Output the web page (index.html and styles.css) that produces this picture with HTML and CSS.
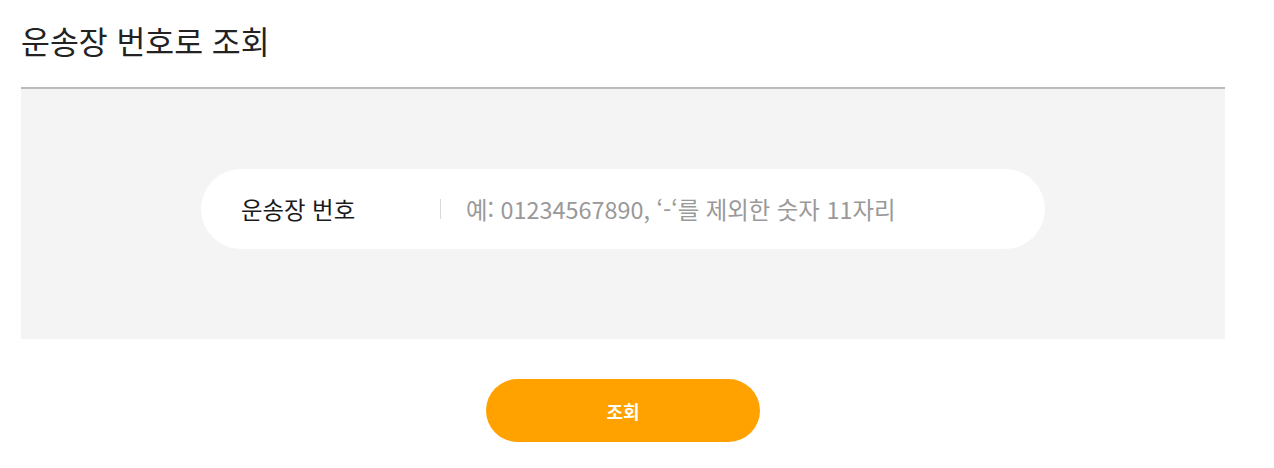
FILE: index.html
```html
<!DOCTYPE html>
<html lang="ko">
<head>
    <meta charset="UTF-8">
    <meta name="viewport" content="width=device-width, initial-scale=1.0">
    <title>운송장 번호로 조회</title>
    <link rel="stylesheet" href="styles.css">
</head>
<body>
    <div class="container">
        <h2 class="title">운송장 번호로 조회</h2>

        <div class="search-box">
            <div class="search-field">
                <label for="invoice-no" class="search-label">운송장 번호</label>
                <span class="divider"></span>
                <input type="text" id="invoice-no" class="search-input" placeholder="예: 01234567890, ‘-‘를 제외한 숫자 11자리">
            </div>
        </div>

        <div class="btn-area">
            <button class="search-btn">조회</button>
        </div>
    </div>
</body>
</html>
```

FILE: styles.css
```css
* {
    margin: 0;
    padding: 0;
    box-sizing: border-box;
}

body {
    font-family: "Noto Sans CJK KR", "Noto Sans", sans-serif;
    background: #fff;
    color: #222;
}

.container {
    width: 1204px;
    margin-left: 21px;
    padding-top: 18px;
}

.title {
    font-size: 31.4px;
    font-weight: 400;
    line-height: 45px;
    color: #222;
    padding-bottom: 24px;
    border-bottom: 2px solid #bbb;
}

.search-box {
    background: #f4f4f4;
    height: 250px;
    display: flex;
    align-items: center;
    justify-content: center;
    padding-bottom: 10px;
}

.search-field {
    width: 844px;
    height: 80px;
    background: #fff;
    border-radius: 40px;
    display: flex;
    align-items: center;
    padding-left: 40px;
}

.search-label {
    width: 199px;
    font-size: 23.4px;
    font-weight: 400;
    color: #1a1a1a;
}

.divider {
    width: 1px;
    height: 20px;
    background: #d9d9d9;
    margin-right: 25px;
}

.search-input {
    flex: 1;
    border: none;
    outline: none;
    background: none;
    font-family: "Noto Sans CJK KR", "Noto Sans", sans-serif;
    font-size: 23.4px;
    color: #222;
    padding-right: 40px;
}

.search-input::placeholder {
    color: #999;
}

.btn-area {
    display: flex;
    justify-content: center;
    padding-top: 40px;
}

.search-btn {
    width: 274px;
    height: 63px;
    border: none;
    border-radius: 32px;
    background: #ffa200;
    color: #fff;
    font-family: "Noto Sans CJK KR", "Noto Sans", sans-serif;
    font-size: 18px;
    font-weight: 700;
    cursor: pointer;
}
```
